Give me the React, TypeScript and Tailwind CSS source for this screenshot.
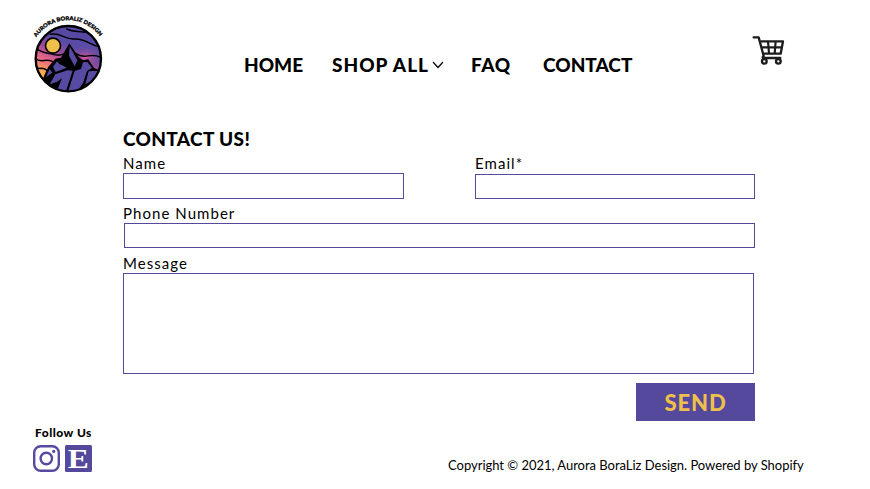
import React from 'react';

function Logo() {
  return (
    <svg className="h-[90px] w-[90px] shrink-0" viewBox="0 0 270 270" aria-label="Aurora BoraLiz Design">
      <defs>
        <linearGradient id="sky" x1="0.65" y1="0" x2="0.2" y2="1">
          <stop offset="0.3" stopColor="#5a4ba5" />
          <stop offset="0.46" stopColor="#a24a9d" />
          <stop offset="0.62" stopColor="#ee6a86" />
          <stop offset="0.8" stopColor="#f9b04a" />
        </linearGradient>
        <radialGradient id="glow">
          <stop offset="0" stopColor="#d8569a" />
          <stop offset="1" stopColor="#5a4ba5" stopOpacity="0" />
        </radialGradient>
        <clipPath id="disc">
          <circle cx="130" cy="146" r="97" />
        </clipPath>
        <path id="arc" d="M34 82 A115 115 0 0 1 226 82" />
      </defs>
      <text className="font-['Lato',sans-serif] text-[16px] font-black" fill="#000" stroke="#000" strokeWidth="0.9">
        <textPath href="#arc" textLength="224" lengthAdjust="spacingAndGlyphs">AURORA BORALIZ DESIGN</textPath>
      </text>
      <g clipPath="url(#disc)">
        <rect x="30" y="46" width="200" height="200" fill="url(#sky)" />
        <ellipse cx="182" cy="142" rx="60" ry="38" fill="url(#glow)" />
        <path d="M30 46H230V111C190 108 187 84 147 87C116 88 108 67 76 73L40 95Z" fill="#5648a3" />
        <g fill="none" stroke="#000" strokeWidth="4.5" strokeLinecap="round">
          <path d="M76 73 C108 67 116 88 147 87 C187 84 190 108 229 111" />
          <path d="M125 57 C149 69 157 61 180 67" />
          <path d="M34 115 C55 133 69 127 84 133 C101 139 111 132 119 132" />
          <path d="M31 145 C47 161 61 144 82 154" />
          <path d="M153 131 C178 150 195 127 225 141" />
          <path d="M30 170 C45 181 52 169 66 181" />
        </g>
        <path
          d="M133 100 L108 143 L91 146 L70 170 L58 196 L48 220 L90 250 L180 250 L235 185 L207 174 L190 148 L174 151 L162 142 L151 127Z"
          fill="#000"
        />
        <g fill="#574aa3">
          <path d="M134 109 L132 137 L149 169 L157 151 L148 134Z" />
          <path d="M96 154 L84 170 L92 186 L125 173 L112 166 L104 163Z" />
          <path d="M74 177 L63 201 L82 188Z" />
          <path d="M174 157 L168 177 L149 183 L130 243 L157 243 L174 220 L186 183 L201 174 L187 156Z" />
          <path d="M128 181 L91 193 L74 223 L95 216 L111 205 L98 237 L123 242 L143 182Z" />
          <path d="M191 184 L181 223 L207 209 L224 182Z" />
        </g>
      </g>
      <circle cx="84" cy="107" r="22.5" fill="#efbf4c" stroke="#000" strokeWidth="5" />
      <circle cx="130" cy="146" r="98" fill="none" stroke="#000" strokeWidth="7" />
    </svg>
  );
}

function CartIcon() {
  return (
    <svg className="h-[50px] w-[60px] shrink-0" viewBox="0 0 180 150" fill="none" stroke="#1c1c1c">
      <path d="M41 37 H56 L71 93 Q64 99 75 99 H121" strokeWidth="7" strokeLinecap="round" strokeLinejoin="round" />
      <path d="M62 49 H129 L122 86 H71" strokeWidth="7" strokeLinejoin="round" />
      <path d="M64 67 H127 M84 48 L87 86 M107 48 L104 86" strokeWidth="6.5" />
      <circle cx="73" cy="109" r="7" strokeWidth="7" />
      <circle cx="115" cy="109" r="7" strokeWidth="7" />
    </svg>
  );
}

function InstagramIcon() {
  return (
    <svg className="h-[27px] w-[27px]" viewBox="0 0 27 27" fill="none" stroke="#574aa0">
      <rect x="1.2" y="1.2" width="24.6" height="24.6" rx="6.5" strokeWidth="2.4" />
      <circle cx="13.3" cy="13.5" r="5.7" strokeWidth="2.4" />
      <circle cx="20.7" cy="6.4" r="1.6" fill="#574aa0" stroke="none" />
    </svg>
  );
}

function Field({ label, className }: { label: string; className: string }) {
  return (
    <label className="block text-[15px] leading-4">
      <span className="block h-[18px] whitespace-nowrap tracking-[1.05px]">{label}</span>
      <input type="text" className={`block border border-[#54499b] bg-white px-2 outline-none ${className}`} />
    </label>
  );
}

export default function App() {
  return (
    <div className="h-[489px] w-[870px] overflow-hidden bg-white font-['Lato',sans-serif] text-black">
      <header className="flex h-[127px] items-start pl-[25px] pt-[10px]">
        <Logo />
        <nav className="ml-[129px] mt-[42px] flex h-6 w-[496px] text-[19px] font-black leading-[25px]">
          <a href="#" className="w-[88px] whitespace-nowrap">HOME</a>
          <a href="#" className="flex w-[139px] whitespace-nowrap tracking-[1px]">
            <span className="w-[100px]">SHOP ALL</span>
            <svg className="mt-[9px] h-[8px] w-[12px]" viewBox="0 0 12 8" fill="none" stroke="#000" strokeWidth="1.2">
              <path d="M1 1 L6 6.5 L11 1" />
            </svg>
          </a>
          <a href="#" className="w-[72px] tracking-[0.6px]">FAQ</a>
          <a href="#">CONTACT</a>
        </nav>
        <div className="mt-[15px]">
          <CartIcon />
        </div>
      </header>

      <main className="ml-[123px] w-[632px]">
        <h1 className="h-7 whitespace-nowrap text-[19px] font-black leading-[23px] tracking-[0.35px]">CONTACT US!</h1>
        <form>
          <div className="flex h-[50px] justify-between">
            <Field label="Name" className="h-[26px] w-[281px]" />
            <Field label="Email*" className="mt-px h-[25px] w-[280px]" />
          </div>
          <div className="h-[50px]">
            <Field label="Phone Number" className="ml-px h-[25px] w-[631px]" />
          </div>
          <label className="block text-[15px] leading-4">
            <span className="block h-[18px] tracking-[1.05px]">Message</span>
            <textarea className="block h-[101px] w-[631px] resize-none border border-[#54499b] bg-white p-2 outline-none" />
          </label>
          <button
            type="button"
            className="ml-auto mt-[9px] block h-[38px] w-[119px] bg-[#54499c] text-[22px] font-black leading-[39px] tracking-[0.9px] text-[#efbf4c]"
          >
            SEND
          </button>
        </form>
      </main>

      <footer className="flex h-[68px] pl-[33px]">
        <div className="w-[415px] pt-[4px]">
          <p className="ml-[2px] h-5 whitespace-nowrap text-[12px] font-black leading-[15px] tracking-[0.5px]">Follow Us</p>
          <div className="flex gap-[5px]">
            <InstagramIcon />
            <svg className="h-[27px] w-[27px] overflow-visible" viewBox="0 0 27 27">
              <rect width="27" height="27" rx="1.5" fill="#54499c" />
              <text x="2.8" y="22.8" fill="#fff" fontSize="28" textLength="21" lengthAdjust="spacingAndGlyphs" className="font-['Liberation_Serif',serif] font-bold">E</text>
            </svg>
          </div>
        </div>
        <p className="mt-[36px] whitespace-nowrap text-[13px] leading-4 tracking-[-0.02px]">
          Copyright © 2021, Aurora BoraLiz Design. Powered by Shopify
        </p>
      </footer>
    </div>
  );
}
